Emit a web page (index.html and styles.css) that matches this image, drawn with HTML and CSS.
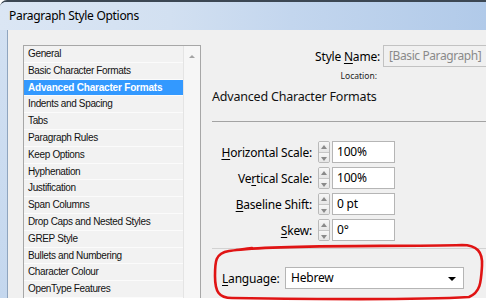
FILE: index.html
```html
<!DOCTYPE html>
<html lang="en">
    <head>
        <meta charset="UTF-8" />
        <meta name="viewport" content="width=device-width, initial-scale=1.0" />
        <title>Paragraph Style Options</title>
        <link rel="stylesheet" href="styles.css">
    </head>
    <body>
        <div class="window">
            <!-- title bar -->
            <div class="titlebar">Paragraph Style Options</div>

            <div class="client">
                <!-- category list -->
                <div class="listbox">
                    <ul class="cats">
                        <li>General</li>
                        <li>Basic Character Formats</li>
                        <li class="on">Advanced Character Formats</li>
                        <li>Indents and Spacing</li>
                        <li>Tabs</li>
                        <li>Paragraph Rules</li>
                        <li>Keep Options</li>
                        <li>Hyphenation</li>
                        <li>Justification</li>
                        <li>Span Columns</li>
                        <li>Drop Caps and Nested Styles</li>
                        <li>GREP Style</li>
                        <li>Bullets and Numbering</li>
                        <li>Character Colour</li>
                        <li>OpenType Features</li>
                    </ul>
                    <div class="scroll"><span class="arrow"></span></div>
                </div>

                <!-- options panel -->
                <div class="panel">
                    <div class="name-row">
                        <label class="name-lbl">Style <u>N</u>ame:</label>
                        <div class="name-box">[Basic Paragraph]</div>
                    </div>
                    <div class="location">Location:</div>
                    <div class="heading">Advanced Character Formats</div>
                    <div class="rule"></div>

                    <div class="fields">
                        <div class="field">
                            <label class="f-lbl"><u>H</u>orizontal Scale:</label>
                            <span class="spin"><i class="up"></i><i class="dn"></i></span>
                            <div class="f-box">100%</div>
                        </div>
                        <div class="field">
                            <label class="f-lbl">Ve<u>r</u>tical Scale:</label>
                            <span class="spin"><i class="up"></i><i class="dn"></i></span>
                            <div class="f-box">100%</div>
                        </div>
                        <div class="field">
                            <label class="f-lbl"><u>B</u>aseline Shift:</label>
                            <span class="spin"><i class="up"></i><i class="dn"></i></span>
                            <div class="f-box">0 pt</div>
                        </div>
                        <div class="field">
                            <label class="f-lbl"><u>S</u>kew:</label>
                            <span class="spin"><i class="up"></i><i class="dn"></i></span>
                            <div class="f-box">0°</div>
                        </div>
                    </div>

                    <div class="sep"></div>

                    <div class="lang-row">
                        <label class="lang-lbl"><u>L</u>anguage:</label>
                        <div class="select">Hebrew<span class="caret"></span></div>
                    </div>
                </div>
            </div>
        </div>

        <!-- red hand drawn circle -->
        <svg class="mark" width="486" height="302" viewBox="0 0 486 302">
            <path d="M 236 250 C 290 244, 400 247, 462 245 C 477 245, 483 252, 482 266 C 481 281, 481 292, 469 297 C 420 300, 300 299, 232 298 C 219 298, 215 292, 215 276 C 215 262, 215 253, 229 251 C 236 250, 245 249, 252 248" fill="none" stroke="#e01414" stroke-width="2.6" stroke-linecap="round" />
        </svg>
    </body>
</html>
```

FILE: styles.css
```css
html,
body {
    margin: 0px;
    padding: 0px;
}

body {
    position: relative;
    width: 486px;
    height: 302px;
    overflow: hidden;
    background: #fff;
    font-family: "Noto Sans", "Open Sans", sans-serif;
    color: #000;
}

ul {
    margin: 0px;
    padding: 0px;
    list-style: none;
}

label u {
    text-decoration-thickness: 1px;
    text-underline-offset: 2px;
}

/* window frame */
.window {
    display: flex;
    flex-direction: column;
    height: 298px;
    background: linear-gradient(180deg, #d3e1f2 0%, #c4d7ee 100%);
    border-top: 2px solid #3c4753;
    border-top-left-radius: 7px;
    box-sizing: border-box;
    overflow: hidden;
}

.titlebar {
    flex-shrink: 0;
    height: 28px;
    padding-left: 9px;
    font-size: 12px;
    letter-spacing: -0.3px;
    line-height: 28px;
    color: #000;
    background: linear-gradient(90deg, #dbe6f4 0%, #d2e0f1 35%, #c3d6ee 60%, #b1cae9 100%);
}

/* dialog body */
.client {
    flex: 1;
    display: flex;
    margin-left: 7px;
    border-left: 1px solid #8fa5bf;
    background: #f0f0f0;
    min-height: 0;
}

/* category list */
.listbox {
    display: flex;
    flex-shrink: 0;
    width: 178px;
    margin: 15px 0px 0px 15px;
    border: 1px solid #a7a7a7;
    border-bottom: none;
    box-sizing: border-box;
    background: #f2f2f2;
}

.cats {
    width: 159px;
    font-family: "Liberation Sans", Arial, sans-serif;
    font-size: 10px;
    letter-spacing: -0.35px;
    color: #111;
}

.cats li {
    height: 16.8px;
    line-height: 16px;
    padding-left: 4px;
    border-bottom: 1px solid #fbfbfb;
    box-sizing: border-box;
    white-space: nowrap;
}

.cats li.on {
    background: #3399ff;
    color: #fff;
    font-weight: bold;
    letter-spacing: -0.2px;
}

.scroll {
    position: relative;
    flex: 1;
    border-left: 1px solid #e4e4e4;
    background: #f6f6f6;
}

.arrow {
    position: absolute;
    top: 9px;
    left: 5px;
    border-left: 3px solid transparent;
    border-right: 3px solid transparent;
    border-bottom: 3px solid #a4a4a4;
}

/* options panel */
.panel {
    flex: 1;
    display: flex;
    flex-direction: column;
    padding-left: 11px;
    font-size: 12px;
    letter-spacing: -0.2px;
    min-width: 0;
}

.name-row {
    display: flex;
    align-items: center;
    margin-top: 15px;
    height: 22px;
}

.name-lbl {
    flex-shrink: 0;
    width: 168px;
    text-align: right;
}

.name-box {
    flex-shrink: 0;
    width: 150px;
    height: 22px;
    margin-left: 3px;
    padding-left: 5px;
    line-height: 20px;
    letter-spacing: -0.4px;
    border: 1px solid #c2c2c2;
    box-sizing: border-box;
    color: #8a8a8a;
    background: #f0f0f0;
    white-space: nowrap;
}

.location {
    width: 165px;
    height: 18px;
    line-height: 18px;
    font-size: 8.5px;
    letter-spacing: 0px;
    text-align: right;
    color: #222;
}

.heading {
    height: 24px;
    line-height: 24px;
    font-size: 12.5px;
    color: #111;
}

.rule {
    margin-top: 12px;
    border-top: 1px solid #a3a3a3;
    margin-right: -20px;
}

/* number fields */
.fields {
    display: flex;
    flex-direction: column;
    gap: 4px;
    margin-top: 19px;
}

.field {
    display: flex;
    align-items: center;
    height: 22px;
}

.f-lbl {
    width: 100px;
    text-align: right;
}

.spin {
    display: flex;
    flex-direction: column;
    width: 12px;
    height: 22px;
    margin-left: 6px;
    border: 1px solid #b9b9b9;
    border-radius: 2px;
    box-sizing: border-box;
    overflow: hidden;
}

.spin i {
    position: relative;
    flex: 1;
    background: linear-gradient(180deg, #f7f7f7 0%, #e6e6e6 100%);
}

.spin i.up {
    border-bottom: 1px solid #c6c6c6;
}

.spin i::after {
    content: "";
    position: absolute;
    left: 2px;
    top: 3px;
    border-left: 3px solid transparent;
    border-right: 3px solid transparent;
}

.spin i.up::after {
    border-bottom: 4px solid #8a8a8a;
}

.spin i.dn::after {
    top: 4px;
    border-top: 4px solid #8a8a8a;
}

.f-box {
    width: 63px;
    height: 22px;
    margin-left: 2px;
    padding-left: 4px;
    line-height: 20px;
    border: 1px solid #b5b5b5;
    box-sizing: border-box;
    background: #fff;
}

.sep {
    margin-top: 7px;
    border-top: 1px solid #d2d2d2;
    margin-right: -20px;
}

/* language */
.lang-row {
    display: flex;
    align-items: center;
    height: 22px;
    margin-top: 18px;
    padding-left: 10px;
}

.lang-lbl {
    width: 63px;
}

.select {
    position: relative;
    width: 179px;
    height: 22px;
    padding-left: 5px;
    line-height: 20px;
    border: 1px solid #b5b5b5;
    box-sizing: border-box;
    background: #fff;
}

.caret {
    position: absolute;
    right: 7px;
    top: 9px;
    border-left: 4px solid transparent;
    border-right: 4px solid transparent;
    border-top: 4px solid #000;
}

/* red marker */
.mark {
    position: absolute;
    top: 0px;
    left: 0px;
    pointer-events: none;
}
```
